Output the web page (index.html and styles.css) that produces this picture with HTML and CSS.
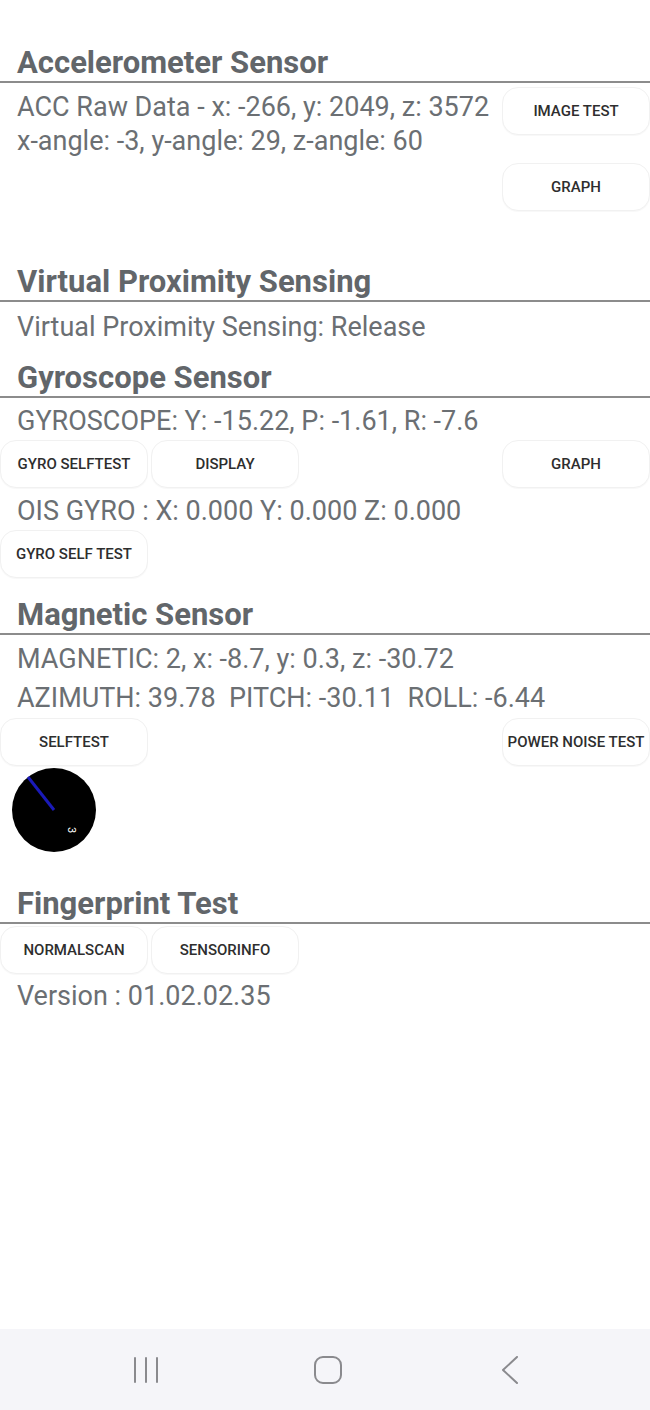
FILE: index.html
```html
<!DOCTYPE html>
<html>
<head>
<meta charset="utf-8">
<link rel="stylesheet" href="styles.css">
</head>
<body>
<div class="page">
  <main class="content">
    <section class="sec sec-acc">
      <h2 class="title">Accelerometer Sensor</h2>
      <div class="acc-row">
        <div class="acc-text">
          <p class="txt">ACC Raw Data - x: -266, y: 2049, z: 3572</p>
          <p class="txt">x-angle: -3, y-angle: 29, z-angle: 60</p>
        </div>
        <div class="acc-btns">
          <button class="btn">IMAGE TEST</button>
          <button class="btn">GRAPH</button>
        </div>
      </div>
    </section>

    <section class="sec sec-vps">
      <h2 class="title">Virtual Proximity Sensing</h2>
      <p class="txt vps-txt">Virtual Proximity Sensing: Release</p>
    </section>

    <section class="sec sec-gyro">
      <h2 class="title">Gyroscope Sensor</h2>
      <p class="txt gyro-txt">GYROSCOPE: Y: -15.22, P: -1.61, R: -7.6</p>
      <div class="btn-row">
        <button class="btn">GYRO SELFTEST</button>
        <button class="btn">DISPLAY</button>
        <button class="btn push">GRAPH</button>
      </div>
      <p class="txt ois-txt">OIS GYRO : X: 0.000 Y: 0.000 Z: 0.000</p>
      <div class="btn-row">
        <button class="btn">GYRO SELF TEST</button>
      </div>
    </section>

    <section class="sec sec-mag">
      <h2 class="title">Magnetic Sensor</h2>
      <p class="txt mag-txt">MAGNETIC: 2, x: -8.7, y: 0.3, z: -30.72</p>
      <p class="txt mag-txt2">AZIMUTH: 39.78&nbsp; PITCH: -30.11&nbsp; ROLL: -6.44</p>
      <div class="btn-row">
        <button class="btn">SELFTEST</button>
        <button class="btn push">POWER NOISE TEST</button>
      </div>
      <div class="compass">
        <svg width="84" height="84" viewBox="0 0 84 84">
          <circle cx="42" cy="42" r="42" fill="#000"/>
          <line x1="42" y1="42" x2="16" y2="9" stroke="#1a1ab8" stroke-width="3"/>
          <text x="0" y="0" transform="translate(56 62) rotate(90)" fill="#fff" font-size="11" font-family="Roboto, sans-serif" text-anchor="middle">3</text>
        </svg>
      </div>
    </section>

    <section class="sec sec-fp">
      <h2 class="title">Fingerprint Test</h2>
      <div class="btn-row fp-row">
        <button class="btn">NORMALSCAN</button>
        <button class="btn">SENSORINFO</button>
      </div>
      <p class="txt ver-txt">Version : 01.02.02.35</p>
    </section>
  </main>

  <nav class="navbar">
    <span class="nav-slot">
      <svg width="26" height="28" viewBox="0 0 26 28">
        <g stroke="#8a8a8e" stroke-width="2" stroke-linecap="round">
          <line x1="2" y1="2" x2="2" y2="26"/>
          <line x1="13" y1="2" x2="13" y2="26"/>
          <line x1="24" y1="2" x2="24" y2="26"/>
        </g>
      </svg>
    </span>
    <span class="nav-slot">
      <svg width="28" height="28" viewBox="0 0 28 28">
        <rect x="1" y="1" width="26" height="26" rx="8" fill="none" stroke="#8a8a8e" stroke-width="2"/>
      </svg>
    </span>
    <span class="nav-slot">
      <svg width="18" height="28" viewBox="0 0 18 28">
        <polyline points="16,1 2,14 16,27" fill="none" stroke="#8a8a8e" stroke-width="2" stroke-linecap="round" stroke-linejoin="round"/>
      </svg>
    </span>
  </nav>
</div>
</body>
</html>
```

FILE: styles.css
```css
* { box-sizing: border-box; }
html, body { margin: 0; padding: 0; background: #fff; }
body { font-family: Roboto, "Noto Sans", sans-serif; }

.page {
  width: 650px;
  height: 1410px;
  display: flex;
  flex-direction: column;
}
.content { flex: 1; padding-top: 45px; }

.title {
  margin: 0;
  height: 38px;
  line-height: 36px;
  padding-left: 17px;
  font-size: 31px;
  font-weight: 700;
  color: #62666a;
  border-bottom: 2px solid #8c8c8c;
}

.txt {
  margin: 0;
  padding-left: 17px;
  font-size: 27px;
  line-height: 34px;
  color: #6b6f73;
  white-space: nowrap;
}

.btn {
  width: 148px;
  height: 48px;
  border: 1px solid #f1f1f1;
  border-radius: 16px;
  background: #fff;
  font-family: Roboto, sans-serif;
  font-size: 15px;
  font-weight: 500;
  color: #2e2e2e;
  padding: 0;
  box-shadow: 0 1px 1px rgba(0,0,0,0.03);
}

.acc-row { display: flex; justify-content: space-between; }
.acc-text { padding-top: 7px; }
.acc-btns { display: flex; flex-direction: column; gap: 28px; padding-top: 4px; }

.btn-row { display: flex; gap: 3px; }
.btn-row .push { margin-left: auto; }

.sec-vps { margin-top: 53px; }
.vps-txt { padding-top: 8px; }

.sec-gyro { margin-top: 16px; }
.gyro-txt { padding-top: 6px; padding-bottom: 2px; }
.ois-txt { padding-top: 6px; padding-bottom: 2px; }

.sec-mag { margin-top: 19px; }
.mag-txt { padding-top: 7px; }
.mag-txt2 { padding-top: 5px; padding-bottom: 3px; }
.compass { padding-left: 12px; height: 84px; margin-top: 2px; }
.compass svg { display: block; }

.sec-fp { margin-top: 34px; }
.fp-row { margin-top: 2px; }
.ver-txt { padding-top: 5px; }

.navbar {
  height: 81px;
  background: #f5f5f9;
  display: flex;
  align-items: center;
  justify-content: center;
  gap: 122px;
  padding-left: 6px;
}
.nav-slot {
  width: 60px;
  display: flex;
  justify-content: center;
  align-items: center;
}
.nav-slot svg { display: block; }
```
